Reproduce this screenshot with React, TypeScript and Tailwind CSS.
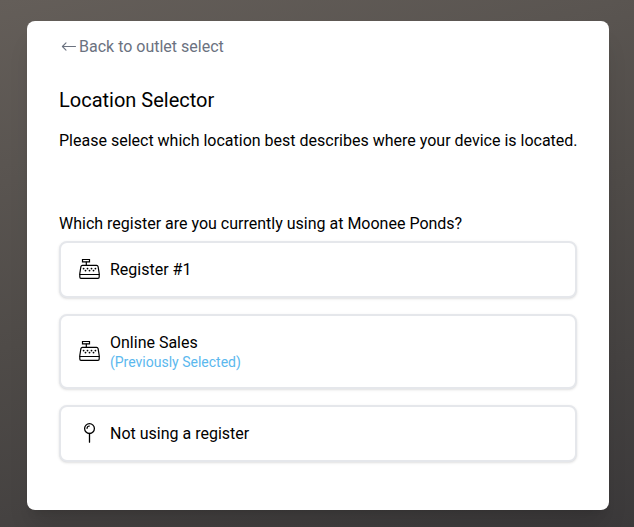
import type { ReactNode } from 'react';

type Option = {
  id: string;
  name: string;
  icon: ReactNode;
  previous?: boolean;
};

function RegisterIcon() {
  return (
    <svg className="w-[21px] h-[21px] shrink-0" viewBox="0 0 21 21" fill="none" stroke="currentColor" strokeWidth="1.2"
      strokeLinecap="round" strokeLinejoin="round" aria-hidden="true">
      <path strokeLinejoin="miter" d="M3.5.5h7v2.4h-7z" />
      <path d="M7.3 3v3.3" />
      <path d="M3.4 6.4h14.2c.9 0 1.3.4 1.5 1.2l1.1 6.9v3.5c0 .9-.4 1.3-1.2 1.3H2c-.8 0-1.2-.4-1.2-1.3v-3.5l1.1-6.9c.2-.8.6-1.2 1.5-1.2z" />
      <path d="M.9 15.5h19.2" />
      <path strokeWidth="1.8" d="M4.6 9.6h.01M8.5 9.6h.01M12.5 9.6h.01M16.4 9.6h.01M6.5 11.6h.01M10.5 11.6h.01M14.5 11.6h.01" />
    </svg>
  );
}

function PinIcon() {
  return (
    <svg className="w-[21px] h-[21px] shrink-0" viewBox="0 0 21 21" fill="none" stroke="currentColor" strokeWidth="1.3"
      strokeLinecap="round" aria-hidden="true">
      <circle cx="10.5" cy="5.6" r="4.9" />
      <path d="M10.5 10.5v8.7" />
      <path strokeWidth="1.2" d="M8 5.4c.1-1.4 1-2.3 2.4-2.4" />
    </svg>
  );
}

const options: Option[] = [
  { id: 'register-1', name: 'Register #1', icon: <RegisterIcon /> },
  { id: 'online-sales', name: 'Online Sales', icon: <RegisterIcon />, previous: true },
  { id: 'none', name: 'Not using a register', icon: <PinIcon /> },
];

function OptionButton({ option }: { option: Option }) {
  return (
    <button type="button"
      className="flex items-center w-full gap-2.5 px-[18px] py-4 rounded-lg border-2 border-[#e5e7eb] bg-white text-left shadow-sm cursor-pointer hover:border-gray-300">
      {option.icon}
      <span className="flex flex-col">
        <span className="leading-[21px]">{option.name}</span>
        {option.previous && <span className="text-sm leading-[18px] text-[#5bb8ee]">(Previously Selected)</span>}
      </span>
    </button>
  );
}

export default function App() {
  return (
    <div className="min-h-screen pt-[21px] pb-[17px] pl-[27px] pr-[25px] bg-linear-[165deg,#645e59_0%,#4f4b48_50%,#3b393a_100%] font-['Roboto',sans-serif] text-base text-black">
      <main className="rounded-lg bg-white px-8 pt-3.5 pb-12 shadow-xl">
        <a href="#outlets" className="inline-flex items-center gap-0.5 leading-6 text-[#6b7280]">
          <svg className="w-[18px] h-[18px]" viewBox="0 0 18 18" fill="none" stroke="currentColor"
            strokeWidth="1.1" strokeLinecap="round" strokeLinejoin="round" aria-hidden="true">
            <path d="M16.5 8.5H3.4M7 4.9L3.4 8.5 7 12.1" />
          </svg>
          Back to outlet select
        </a>

        <h1 className="mt-[23px] text-xl leading-7 font-normal">Location Selector</h1>
        <p className="mt-[15px] -mr-2 leading-6">Please select which location best describes where your device is located.</p>

        <h2 className="mt-[59px] mb-[5px] leading-6">Which register are you currently using at Moonee Ponds?</h2>
        <div className="flex flex-col gap-4">
          {options.map(option => <OptionButton key={option.id} option={option} />)}
        </div>
      </main>
    </div>
  );
}
